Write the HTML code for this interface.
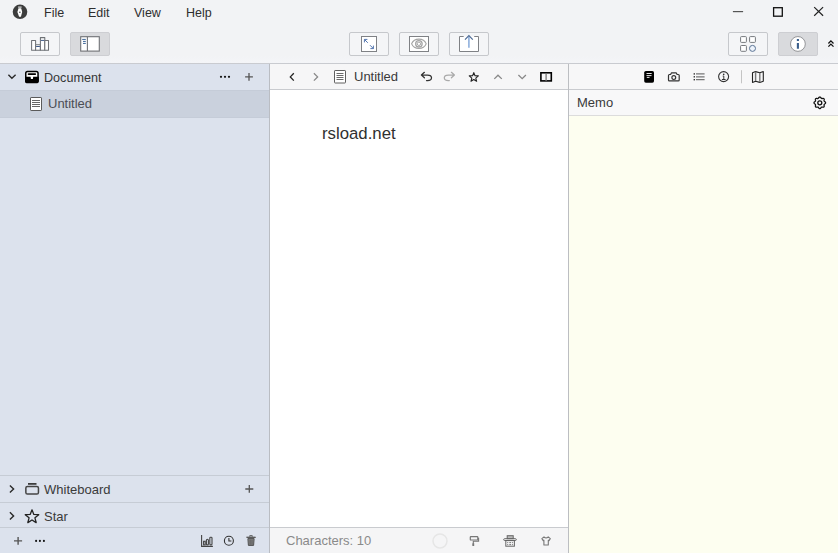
<!DOCTYPE html>
<html><head><meta charset="utf-8">
<style>
*{margin:0;padding:0;box-sizing:border-box}
html,body{width:838px;height:553px;overflow:hidden}
body{position:relative;background:#f2f3f5;font-family:"Liberation Sans",sans-serif;color:#333}
.a{position:absolute}
.t{position:absolute;white-space:nowrap;line-height:1}
svg{position:absolute;overflow:visible}
.btn{position:absolute;top:32px;width:40px;height:24px;border:1px solid #c6c8cc;border-radius:2px;background:#f4f5f7}
.btn.on{background:#d9dadd;border-color:#cdced2}
</style></head><body>

<!-- top bar -->
<div class="a" style="left:0;top:56px;width:838px;height:7px;background:linear-gradient(#f2f3f5,#f4f5f8)"></div>
<div class="a" style="left:0;top:63px;width:838px;height:1px;background:#c9cbd0"></div>



<div class="t" style="left:44px;top:7px;font-size:12.5px;color:#2e2e2e">File</div>
<div class="t" style="left:88px;top:7px;font-size:12.5px;color:#2e2e2e">Edit</div>
<div class="t" style="left:134px;top:7px;font-size:12.5px;color:#2e2e2e">View</div>
<div class="t" style="left:186px;top:7px;font-size:12.5px;color:#2e2e2e">Help</div>

<!-- toolbar buttons -->
<div class="btn" style="left:20px"></div>
<div class="btn on" style="left:70px"></div>
<div class="btn" style="left:349px"></div>
<div class="btn" style="left:399px"></div>
<div class="btn" style="left:449px"></div>
<div class="btn" style="left:728px"></div>
<div class="btn on" style="left:778px"></div>

<!-- sidebar -->
<div class="a" style="left:0;top:64px;width:269px;height:489px;background:#dce2ed"></div>
<div class="a" style="left:269px;top:64px;width:1px;height:489px;background:#babdc3"></div>
<div class="a" style="left:0;top:90px;width:269px;height:28px;background:#cad1dd;border-top:1px solid #c5ccd8;border-bottom:1px solid #c5ccd8"></div>
<div class="t" style="left:44px;top:72px;font-size:12.6px;color:#353535">Document</div>
<div class="t" style="left:48px;top:97px;font-size:13px;color:#4b4e55">Untitled</div>

<div class="a" style="left:0;top:475px;width:269px;height:1px;background:#c6ccd5"></div>
<div class="a" style="left:0;top:502px;width:269px;height:1px;background:#c6ccd5"></div>
<div class="a" style="left:0;top:527px;width:269px;height:1px;background:#c6ccd5"></div>
<div class="t" style="left:44px;top:483px;font-size:13px;color:#3a3a3a">Whiteboard</div>
<div class="t" style="left:44px;top:510px;font-size:13px;color:#3a3a3a">Star</div>

<!-- editor -->
<div class="a" style="left:270px;top:64px;width:298px;height:25px;background:#f6f6f7"></div>
<div class="a" style="left:270px;top:89px;width:298px;height:1px;background:#c9cbcf"></div>
<div class="a" style="left:270px;top:90px;width:298px;height:437px;background:#fff"></div>
<div class="a" style="left:270px;top:527px;width:298px;height:1px;background:#c9cbcf"></div>
<div class="a" style="left:270px;top:528px;width:298px;height:25px;background:#f5f5f6"></div>
<div class="a" style="left:568px;top:64px;width:1px;height:489px;background:#bcbec2"></div>
<div class="t" style="left:354px;top:70px;font-size:13px;color:#3a3a3a">Untitled</div>
<div class="t" style="left:322px;top:125.5px;font-size:16.8px;color:#303030">rsload.net</div>
<div class="t" style="left:286px;top:534px;font-size:13px;color:#8a8a8a">Characters: 10</div>

<!-- right panel -->
<div class="a" style="left:569px;top:64px;width:269px;height:25px;background:#f7f7f8"></div>
<div class="a" style="left:569px;top:89px;width:269px;height:1px;background:#c9cbcf"></div>
<div class="a" style="left:569px;top:90px;width:269px;height:25px;background:#f8f8f9"></div>
<div class="a" style="left:569px;top:115px;width:269px;height:1px;background:#dcdcdc"></div>
<div class="a" style="left:569px;top:116px;width:269px;height:437px;background:#fdfef0"></div>
<div class="t" style="left:577px;top:96px;font-size:13px;color:#3a3a3a">Memo</div>


<svg class="a" style="left:0;top:0" width="838" height="553" viewBox="0 0 838 553">
<!-- app icon -->
<circle cx="20" cy="11.8" r="7.3" fill="#3d3d3d"/>
<path d="M18.1 7.1H21.6" stroke="#fff" stroke-width="1"/>
<path d="M18.5 8.2H21.2L22.2 11.9L20.9 16.8H19.1L17.4 11.9Z" fill="#fff"/>
<circle cx="19.9" cy="12.2" r="0.75" fill="#3d3d3d"/>

<!-- btn1 books -->
<g stroke="#6e7176" stroke-width="1.05" fill="#fff" stroke-linejoin="round">
<path d="M31.6 40.5H35.6V50.2H31.6Z"/>
<path d="M35.6 44.7H40.4V50.2H35.6Z"/>
<path d="M40.4 37.6H44.8V50.2H40.4Z"/>
<path d="M44.8 40.5H48.5V50.2H44.8Z"/>
</g>
<path d="M36.1 46.5H39.9M40.9 40.4H44.3" stroke="#3f5a88" stroke-width="1"/>

<!-- btn2 sidebar layout -->
<rect x="80.7" y="36.7" width="18.6" height="14.4" fill="#fff" stroke="#707276" stroke-width="1.1"/>
<path d="M87.4 36.7V51.1" stroke="#707276" stroke-width="1.1"/>
<path d="M82.2 39.4H85.8M83 41.4H85.8M83 43.4H85.8" stroke="#3c6597" stroke-width="1"/>

<!-- btn3 expand -->
<rect x="361.5" y="36.5" width="15" height="15" fill="#fff" stroke="#7f8185" stroke-width="1"/>
<path d="M364.4 42.4V39.4H367.4M364.4 39.4L367.8 42.8" stroke="#5577b0" stroke-width="1" fill="none"/>
<path d="M373.4 45.6V48.6H370.4M373.4 48.6L370 45.2" stroke="#5577b0" stroke-width="1" fill="none"/>

<!-- btn4 eye -->
<rect x="409.5" y="36.5" width="19" height="15" fill="#fff" stroke="#7f8185" stroke-width="1"/>
<path d="M411.6 43.8C414.2 37.6 423.6 37.6 426.2 43.8C423.6 50 414.2 50 411.6 43.8Z" fill="none" stroke="#a4a4a4" stroke-width="1.05"/>
<circle cx="418.9" cy="43.8" r="3.2" fill="none" stroke="#a4a4a4" stroke-width="1.35"/>
<circle cx="418.9" cy="43.8" r="1.7" fill="none" stroke="#9a9a9a" stroke-width="0.9"/>

<!-- btn5 upload -->
<path d="M463.7 36.5H459.5V51.5H478.5V36.5H474.2" fill="#fff" stroke="#7f8185" stroke-width="1"/>
<path d="M468.9 36.5V47.8" stroke="#8fb0dd" stroke-width="1.6"/>
<path d="M465 39.6L468.9 35.6L472.8 39.6" fill="none" stroke="#4d6a94" stroke-width="1.2"/>

<!-- btn6 grid -->
<g fill="#fff" stroke="#76797e" stroke-width="1">
<rect x="740.6" y="36.6" width="5.8" height="5.8" rx="0.8"/>
<rect x="749.6" y="36.6" width="5.8" height="5.8" rx="0.8"/>
<rect x="740.6" y="45.5" width="5.8" height="5.8" rx="0.8"/>
</g>
<circle cx="752.5" cy="48.4" r="3" fill="#edf3fb" stroke="#5a7394" stroke-width="1"/>

<!-- btn7 info -->
<circle cx="797.9" cy="43.95" r="7.4" fill="#fff" stroke="#8a8b8e" stroke-width="0.9"/>
<path d="M797.9 39V40.9M797.9 43.1V48.7" stroke="#3b5f8c" stroke-width="2.1"/>

<!-- double chevron -->
<path d="M828.4 43.5L830.9 40.9L833.5 43.5M828.4 46.6L830.9 44.1L833.5 46.6" fill="none" stroke="#111" stroke-width="1.3"/>


<!-- sidebar: Document row -->
<path d="M8.4 74.8L11.9 78.3L15.6 74.8" fill="none" stroke="#2a2a2a" stroke-width="1.4"/>
<rect x="25.75" y="71.55" width="12.3" height="10.9" rx="1.8" fill="#fff" stroke="#000" stroke-width="1.5"/>
<path d="M28.6 74.1H35.2" stroke="#000" stroke-width="1.9" stroke-linecap="round"/>
<path d="M25 76.7H30.6L30.9 78.9H32.9L33.2 76.7H38.8V81.2Q38.8 82.9 37 82.9H26.8Q25 82.9 25 81.2Z" fill="#000"/>
<g fill="#111"><circle cx="221" cy="76.8" r="1.1"/><circle cx="225" cy="76.8" r="1.1"/><circle cx="229" cy="76.8" r="1.1"/></g>
<path d="M245.1 76.9H252.9M249 73V80.8" stroke="#555" stroke-width="1.3"/>

<!-- Untitled doc icon -->
<rect x="30.5" y="97.5" width="11" height="13" rx="0.6" fill="#fff" stroke="#5a5a5a" stroke-width="1"/>
<path d="M32 100.5H40M32 102.5H40M32 104.5H40M32 106.5H40" stroke="#666" stroke-width="1"/>

<!-- Whiteboard row -->
<path d="M9.9 485.4L13.6 489L9.9 492.6" fill="none" stroke="#2a2a2a" stroke-width="1.4"/>
<path d="M28 483.9H36.5" stroke="#333" stroke-width="1.7"/>
<rect x="25.85" y="486.5" width="12.6" height="7.5" rx="1.6" fill="none" stroke="#444" stroke-width="1.5"/>
<path d="M245.3 489H253.3M249.3 485V492.8" stroke="#555" stroke-width="1.3"/>

<!-- Star row -->
<path d="M9.9 512.3L13.6 515.9L9.9 519.5" fill="none" stroke="#2a2a2a" stroke-width="1.4"/>
<path d="M32.00 509.80L33.82 514.39L38.75 514.71L34.95 517.86L36.17 522.64L32.00 520.00L27.83 522.64L29.05 517.86L25.25 514.71L30.18 514.39Z" fill="none" stroke="#222" stroke-width="1.3" stroke-linejoin="round"/>

<!-- footer -->
<path d="M14 540.9H22.1M18.1 537.1V544.7" stroke="#555" stroke-width="1.4"/>
<g fill="#111"><circle cx="36.1" cy="540.9" r="1.05"/><circle cx="39.9" cy="540.9" r="1.05"/><circle cx="43.9" cy="540.9" r="1.05"/></g>
<path d="M201.6 535.1V546.4H212.9" fill="none" stroke="#444" stroke-width="1.1"/>
<g fill="none" stroke="#444" stroke-width="1.1">
<rect x="203.6" y="541.3" width="1.6" height="3.6"/>
<rect x="206.4" y="539.3" width="2" height="5.6" rx="1"/>
<rect x="209.8" y="537.3" width="2.2" height="7.6" rx="0.8"/>
</g>
<circle cx="228.9" cy="540.8" r="4.5" fill="none" stroke="#333" stroke-width="1.1"/>
<path d="M228.9 537.9V541H231.4" fill="none" stroke="#333" stroke-width="1.1"/>
<path d="M246.4 537.3H255.7" stroke="#555" stroke-width="1.3"/>
<path d="M249.7 536.6V535.7H252.3V536.6" fill="none" stroke="#555" stroke-width="1"/>
<path d="M247.9 538.6H254.1L253.6 545.4H248.4Z" fill="#8a8a8a" stroke="#505050" stroke-width="1"/>
<path d="M250.1 539.5V544.8M252 539.5V544.8" stroke="#505050" stroke-width="0.9"/>

<!-- editor toolbar -->
<path d="M293.8 73.2L290.3 76.9L293.8 80.6" fill="none" stroke="#222" stroke-width="1.3"/>
<path d="M313.9 73.2L317.6 76.9L313.9 80.6" fill="none" stroke="#888" stroke-width="1.3"/>
<rect x="334.5" y="70.5" width="11" height="12.5" rx="0.6" fill="#fff" stroke="#606060" stroke-width="1"/>
<path d="M336.5 73.5H343.5M336.5 75.5H343.5M336.5 77.5H343.5M336.5 79.5H343.5" stroke="#6a6a6a" stroke-width="1"/>
<path d="M424.4 72.3L421.4 75L424.4 77.8M421.5 75H427.5Q431.5 75 431.5 77.8Q431.5 80.6 427.5 80.6H426.5" fill="none" stroke="#333" stroke-width="1.25" stroke-linejoin="round" stroke-linecap="round"/>
<path d="M451.4 72.3L454.4 75L451.4 77.8M454.3 75H448.3Q444.3 75 444.3 77.8Q444.3 80.6 448.3 80.6H449.3" fill="none" stroke="#aaa" stroke-width="1.25" stroke-linejoin="round" stroke-linecap="round"/>
<path d="M473.80 72.60L475.03 75.70L478.37 75.92L475.80 78.05L476.62 81.28L473.80 79.50L470.98 81.28L471.80 78.05L469.23 75.92L472.57 75.70Z" fill="none" stroke="#222" stroke-width="1.1" stroke-linejoin="round"/>
<path d="M494.3 78.9L498 75.2L501.8 78.9" fill="none" stroke="#888" stroke-width="1.3"/>
<path d="M518.4 75L522.2 78.6L525.9 75" fill="none" stroke="#888" stroke-width="1.3"/>
<rect x="540.9" y="72.8" width="10.4" height="8.1" fill="none" stroke="#000" stroke-width="1.6"/>
<path d="M546.1 73.5V81" stroke="#777" stroke-width="1.3"/>

<!-- right panel toolbar -->
<rect x="644.2" y="71" width="9.8" height="11.7" rx="1.6" fill="#000"/>
<path d="M646.5 73.5H651.7M646.5 75.6H651.5M646.8 77.4H649.5" stroke="#fff" stroke-width="0.9"/>
<path d="M668.5 75.4Q668.5 74.5 669.4 74.5H670.6L671.4 72.9H676.3L677.1 74.5H678.3Q679.2 74.5 679.2 75.4V80Q679.2 80.9 678.3 80.9H669.4Q668.5 80.9 668.5 80Z" fill="none" stroke="#333" stroke-width="1.2" stroke-linejoin="round"/>
<circle cx="673.8" cy="77.6" r="1.9" fill="none" stroke="#333" stroke-width="1.2"/>
<g fill="#333"><rect x="693.6" y="73.2" width="1.4" height="1.4"/><rect x="693.6" y="76.1" width="1.4" height="1.4"/><rect x="693.6" y="79" width="1.4" height="1.4"/></g>
<path d="M696 73.9H704.6M696 76.8H704.6M696 79.7H704.6" stroke="#777" stroke-width="1.3"/>
<circle cx="723.6" cy="76.6" r="5" fill="none" stroke="#333" stroke-width="1.1"/>
<circle cx="723.7" cy="74.4" r="0.8" fill="#333"/>
<path d="M722.7 76.1H723.8V79.4M721.9 79.5H725.6" fill="none" stroke="#333" stroke-width="1"/>
<path d="M741.5 70.2V83.3" stroke="#c4c4c4" stroke-width="1"/>
<path d="M752.5 72.8L755.6 71.6L759.8 72.8L763.3 71.6V81.2L759.8 82.4L755.6 81.2L752.5 82.4Z" fill="none" stroke="#222" stroke-width="1.1" stroke-linejoin="round"/>
<path d="M755.6 71.8V81M759.8 73V82.2" stroke="#777" stroke-width="1.4"/>

<!-- gear -->
<path d="M819.80 97.00L820.18 97.06L820.53 97.26L820.82 97.65L821.07 98.06L821.33 98.30L821.60 98.46L821.90 98.54L822.26 98.55L822.72 98.43L823.20 98.37L823.59 98.48L823.90 98.70L824.12 99.01L824.23 99.40L824.17 99.88L824.05 100.34L824.06 100.70L824.14 101.00L824.30 101.27L824.54 101.53L824.95 101.78L825.34 102.07L825.54 102.42L825.60 102.80L825.54 103.18L825.34 103.53L824.95 103.82L824.54 104.07L824.30 104.33L824.14 104.60L824.06 104.90L824.05 105.26L824.17 105.72L824.23 106.20L824.12 106.59L823.90 106.90L823.59 107.12L823.20 107.23L822.72 107.17L822.26 107.05L821.90 107.06L821.60 107.14L821.33 107.30L821.07 107.54L820.82 107.95L820.53 108.34L820.18 108.54L819.80 108.60L819.42 108.54L819.07 108.34L818.78 107.95L818.53 107.54L818.27 107.30L818.00 107.14L817.70 107.06L817.34 107.05L816.88 107.17L816.40 107.23L816.01 107.12L815.70 106.90L815.48 106.59L815.37 106.20L815.43 105.72L815.55 105.26L815.54 104.90L815.46 104.60L815.30 104.33L815.06 104.07L814.65 103.82L814.26 103.53L814.06 103.18L814.00 102.80L814.06 102.42L814.26 102.07L814.65 101.78L815.06 101.53L815.30 101.27L815.46 101.00L815.54 100.70L815.55 100.34L815.43 99.88L815.37 99.40L815.48 99.01L815.70 98.70L816.01 98.48L816.40 98.37L816.88 98.43L817.34 98.55L817.70 98.54L818.00 98.46L818.27 98.30L818.53 98.06L818.78 97.65L819.07 97.26L819.42 97.06Z" fill="none" stroke="#111" stroke-width="1.25" stroke-linejoin="round"/>
<circle cx="819.8" cy="102.8" r="2" fill="none" stroke="#111" stroke-width="1.3"/>

<!-- status bar -->
<circle cx="440" cy="541" r="7" fill="none" stroke="#e6e6e6" stroke-width="1.5"/>
<rect x="470.3" y="536.6" width="7.5" height="3.4" rx="0.6" fill="none" stroke="#777" stroke-width="1.2"/>
<path d="M477.8 538.3H478.6V541.2H473.3V545.5" fill="none" stroke="#777" stroke-width="1.1"/>
<path d="M473.3 543.3V546" stroke="#777" stroke-width="1.8"/>
<rect x="507.2" y="535.7" width="6" height="3" fill="#bbb" stroke="#666" stroke-width="1"/>
<rect x="503.7" y="538.7" width="12.6" height="1.8" rx="0.9" fill="none" stroke="#666" stroke-width="1"/>
<rect x="505.8" y="540.6" width="8.6" height="5.6" fill="none" stroke="#666" stroke-width="1"/>
<g fill="#777"><rect x="507.2" y="542.1" width="1" height="1"/><rect x="509.3" y="542.1" width="1.8" height="1"/><rect x="512.1" y="542.1" width="1" height="1"/><rect x="507.2" y="544.1" width="1" height="1"/><rect x="509.3" y="544.1" width="1.8" height="1"/><rect x="512.1" y="544.1" width="1" height="1"/></g>
<path d="M544 536.8L541.9 538.6L543.2 540.6L543.9 540.2V545H548.3V540.2L549 540.6L550.3 538.6L548.2 536.8Q546.1 538.9 544 536.8Z" fill="none" stroke="#777" stroke-width="1.1" stroke-linejoin="round"/>

<path d="M732.9 11.6H743.1" stroke="#555" stroke-width="1.2"/>
<rect x="773.6" y="7.7" width="8.7" height="8.5" fill="none" stroke="#111" stroke-width="1.3"/>
<path d="M814.2 7.1L823.1 15.8M823.1 7.1L814.2 15.8" stroke="#222" stroke-width="1.2"/>

</svg>

</body></html>
